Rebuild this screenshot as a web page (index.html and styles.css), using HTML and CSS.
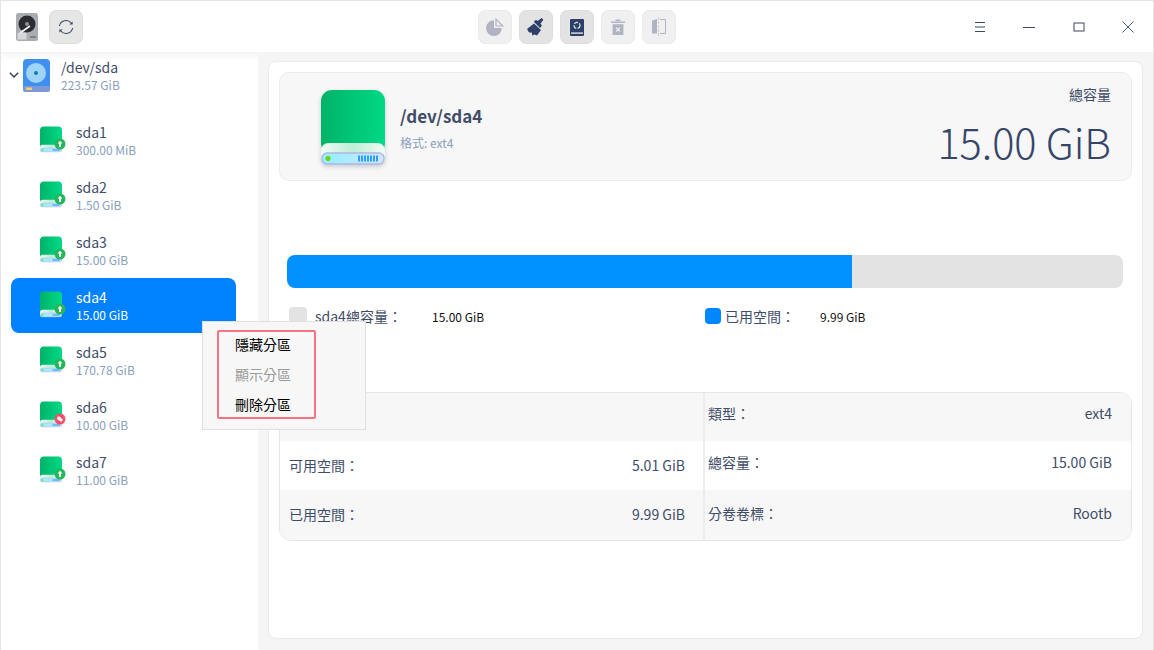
FILE: index.html
```html
<!DOCTYPE html>
<html lang="zh-Hant">
<head>
    <meta charset="UTF-8">
    <meta name="viewport" content="width=device-width, initial-scale=1.0">
    <title>磁碟管理器</title>
    <link rel="stylesheet" href="styles.css">
</head>
<body>
    <svg class="defs" width="0" height="0">
        <defs>
            <linearGradient id="green" x1="0" x2="1" y1="0" y2="0">
                <stop offset="0" stop-color="#00b368"/>
                <stop offset="1" stop-color="#00d985"/>
            </linearGradient>
            <linearGradient id="band" x1="0" x2="1" y1="0" y2="0">
                <stop offset="0" stop-color="#f2fbf6"/>
                <stop offset=".5" stop-color="#bdeed6"/>
                <stop offset="1" stop-color="#f2fbf6"/>
            </linearGradient>
            <linearGradient id="front" x1="0" x2="1" y1="0" y2="0">
                <stop offset="0" stop-color="#8ff0ff"/>
                <stop offset="1" stop-color="#d4e4ff"/>
            </linearGradient>
            <symbol id="drive" viewBox="0 0 64 76">
                <rect x="0" y="0" width="64" height="64" rx="11" fill="url(#green)"/>
                <path d="M0 62 Q0 53 8 53 H56 Q64 53 64 62 V70 H0 Z" fill="url(#band)"/>
                <rect x="1" y="63" width="62" height="11" rx="5" fill="url(#front)" stroke="#b0b8de" stroke-width="1.5"/>
                <circle cx="7" cy="68.5" r="2.5" fill="#6fd300"/>
                <path d="M38 65.5v6M41 65.5v6M44 65.5v6M47 65.5v6M50 65.5v6M53 65.5v6M56 65.5v6" stroke="#0a8cff" stroke-width="1.6"/>
            </symbol>
            <symbol id="badge-up" viewBox="0 0 12 12">
                <circle cx="6" cy="6" r="5.5" fill="#22b85a"/>
                <path d="M6 2.8 8.4 5.6H7V9H5V5.6H3.6Z" fill="#fff"/>
            </symbol>
            <symbol id="badge-off" viewBox="0 0 12 12">
                <circle cx="6" cy="6" r="5.5" fill="#f4506a"/>
                <path d="M3 4.5 5 3.2 9 6.8 7.6 8.8 3.4 6.6Z" fill="#fff"/>
            </symbol>
        </defs>
    </svg>

    <div class="window">
        <header class="titlebar">
            <div class="titlebar-left">
                <svg class="app-icon" viewBox="0 0 22 28" width="22" height="28">
                    <rect x="0" y="0" width="22" height="28" rx="2.5" fill="#a9adb2"/>
                    <circle cx="11" cy="11" r="8.5" fill="#2a2c31"/>
                    <circle cx="11" cy="11" r="2" fill="#8d9096"/>
                    <rect x="1.5" y="20" width="9" height="6.5" fill="#d5d7da"/>
                    <path d="M4 20 14 13" stroke="#f4f4f4" stroke-width="1.6"/>
                    <path d="M14 24h6" stroke="#7e8186" stroke-width="2"/>
                </svg>
                <button class="tool-btn">
                    <svg viewBox="0 0 18 18" width="18" height="18" fill="none" stroke="#3b4766" stroke-width="1.1">
                        <path d="M2.4 8A6.7 6.7 0 0 1 14.2 5"/>
                        <path d="M15.6 10A6.7 6.7 0 0 1 3.8 13"/>
                        <path d="M15.6 3.4V6.6H12.4Z" fill="#3b4766" stroke="none"/>
                        <path d="M2.4 14.6V11.4H5.6Z" fill="#3b4766" stroke="none"/>
                    </svg>
                </button>
            </div>
            <div class="toolbar">
                <button class="tool-btn tool-btn-light">
                    <svg viewBox="0 0 18 18" width="18" height="18">
                        <path d="M8 2.2V10H15.8A7.9 7.9 0 1 1 8 2.2Z" fill="#b0b4c2"/>
                        <path d="M10 1.2 16.8 8H10Z" fill="none" stroke="#b0b4c2" stroke-width="1.2"/>
                    </svg>
                </button>
                <button class="tool-btn tool-btn-on">
                    <svg viewBox="0 0 20 20" width="20" height="20" fill="#2f4068">
                        <path d="M1 12 8 6.4 15 13 11 18.6 8.6 17.4 6.4 18.4 5.6 15.6 3 15.6Z"/>
                        <path d="M7.8 4.8 10 2.8 11.6 4 15.6 1 17.4 2.8 14.4 6.8 16 8.4 14 11Z"/>
                    </svg>
                </button>
                <button class="tool-btn tool-btn-on">
                    <svg viewBox="0 0 14 17" width="14" height="17">
                        <rect width="14" height="17" rx="1" fill="#2f4068"/>
                        <path d="M1 13.4H13V14.8H1Z" fill="#e4e5e8"/>
                        <circle cx="7" cy="6.4" r="3" fill="none" stroke="#e4e5e8" stroke-width="1.2" stroke-dasharray="4 1.4"/>
                    </svg>
                </button>
                <button class="tool-btn tool-btn-light">
                    <svg viewBox="0 0 16 18" width="16" height="18">
                        <path d="M5.5 1.5H10.5V3H5.5ZM1 3.4H15V5H1ZM2.6 6.2H13.4V17H2.6Z" fill="#b0b4c2"/>
                        <path d="M6 9.5 10 13.5M10 9.5 6 13.5" stroke="#eceded" stroke-width="1.1"/>
                    </svg>
                </button>
                <button class="tool-btn tool-btn-light">
                    <svg viewBox="0 0 16 20" width="16" height="20">
                        <path d="M1 3.5 6 2V16.5H1Z" fill="#b0b4c2"/>
                        <path d="M9 2.5H14.5V16.5H9" fill="none" stroke="#b0b4c2" stroke-width="1"/>
                        <path d="M7.5 0V20" stroke="#c9ccd4" stroke-width="1" stroke-dasharray="3 1"/>
                    </svg>
                </button>
            </div>
            <div class="window-btns">
                <button class="win-btn">
                    <svg viewBox="0 0 12 12" width="12" height="12"><path d="M1 1.5H11M1 6H11M1 10.5H11" stroke="#3b4766"/></svg>
                </button>
                <button class="win-btn">
                    <svg viewBox="0 0 12 12" width="12" height="12"><path d="M0 6.5H12" stroke="#3b4766"/></svg>
                </button>
                <button class="win-btn">
                    <svg viewBox="0 0 12 12" width="12" height="12"><rect x="1" y="2" width="10" height="8" fill="none" stroke="#3b4766"/></svg>
                </button>
                <button class="win-btn">
                    <svg viewBox="0 0 12 12" width="12" height="12"><path d="M.5.5 11.5 11.5M11.5.5 .5 11.5" stroke="#3b4766" stroke-width=".9"/></svg>
                </button>
            </div>
        </header>

        <div class="content">
            <aside class="sidebar">
                <div class="device">
                    <svg class="chevron" viewBox="0 0 10 6" width="10" height="6"><path d="M.8.8 5 5 9.2.8" fill="none" stroke="#2f3c58" stroke-width="1.4"/></svg>
                    <svg class="device-icon" viewBox="0 0 27 33" width="27" height="33">
                        <rect width="27" height="33" rx="4" fill="#3f8ff0"/>
                        <rect y="27" width="27" height="6" rx="2" fill="#7d99d8"/>
                        <circle cx="13" cy="14" r="10" fill="#9ed5f7"/>
                        <circle cx="13" cy="14" r="2" fill="#0f7fb0"/>
                        <rect x="3" y="28.5" width="6" height="2.5" fill="#f0d070"/>
                    </svg>
                    <div class="part-text device-text">
                        <span class="part-name">/dev/sda</span>
                        <span class="part-size">223.57 GiB</span>
                    </div>
                </div>
                <ul class="part-list">
                    <li class="part">
                        <span class="part-icon"><svg class="drive-sm"><use href="#drive"/></svg><svg class="badge"><use href="#badge-up"/></svg></span>
                        <div class="part-text"><span class="part-name">sda1</span><span class="part-size">300.00 MiB</span></div>
                    </li>
                    <li class="part">
                        <span class="part-icon"><svg class="drive-sm"><use href="#drive"/></svg><svg class="badge"><use href="#badge-up"/></svg></span>
                        <div class="part-text"><span class="part-name">sda2</span><span class="part-size">1.50 GiB</span></div>
                    </li>
                    <li class="part">
                        <span class="part-icon"><svg class="drive-sm"><use href="#drive"/></svg><svg class="badge"><use href="#badge-up"/></svg></span>
                        <div class="part-text"><span class="part-name">sda3</span><span class="part-size">15.00 GiB</span></div>
                    </li>
                    <li class="part part-selected">
                        <span class="part-icon"><svg class="drive-sm"><use href="#drive"/></svg><svg class="badge"><use href="#badge-up"/></svg></span>
                        <div class="part-text"><span class="part-name">sda4</span><span class="part-size">15.00 GiB</span></div>
                    </li>
                    <li class="part">
                        <span class="part-icon"><svg class="drive-sm"><use href="#drive"/></svg><svg class="badge"><use href="#badge-up"/></svg></span>
                        <div class="part-text"><span class="part-name">sda5</span><span class="part-size">170.78 GiB</span></div>
                    </li>
                    <li class="part">
                        <span class="part-icon"><svg class="drive-sm"><use href="#drive"/></svg><svg class="badge"><use href="#badge-off"/></svg></span>
                        <div class="part-text"><span class="part-name">sda6</span><span class="part-size">10.00 GiB</span></div>
                    </li>
                    <li class="part">
                        <span class="part-icon"><svg class="drive-sm"><use href="#drive"/></svg><svg class="badge"><use href="#badge-up"/></svg></span>
                        <div class="part-text"><span class="part-name">sda7</span><span class="part-size">11.00 GiB</span></div>
                    </li>
                </ul>
            </aside>

            <main class="panel">
                <section class="info-card">
                    <svg class="drive-lg"><use href="#drive"/></svg>
                    <div class="info-title">
                        <h1>/dev/sda4</h1>
                        <p>格式: ext4</p>
                    </div>
                    <div class="info-total">
                        <span class="total-label">總容量</span>
                        <span class="total-value">15.00 GiB</span>
                    </div>
                </section>

                <div class="usage-bar"><div class="usage-fill" style="width: 67.6%"></div></div>

                <div class="legend">
                    <div class="legend-item legend-total">
                        <span class="swatch swatch-grey"></span>
                        <span class="legend-label">sda4總容量：</span>
                        <span class="legend-value">15.00 GiB</span>
                    </div>
                    <div class="legend-item">
                        <span class="swatch swatch-blue"></span>
                        <span class="legend-label">已用空間：</span>
                        <span class="legend-value">9.99 GiB</span>
                    </div>
                </div>

                <div class="details">
                    <div class="row row-grey"><span></span><span></span></div>
                    <div class="row row-grey"><span>類型：</span><span>ext4</span></div>
                    <div class="row"><span>可用空間：</span><span>5.01 GiB</span></div>
                    <div class="row"><span>總容量：</span><span>15.00 GiB</span></div>
                    <div class="row row-grey"><span>已用空間：</span><span>9.99 GiB</span></div>
                    <div class="row row-grey"><span>分卷卷標：</span><span>Rootb</span></div>
                </div>
            </main>
        </div>

        <div class="context-menu">
            <ul class="menu-box">
                <li>隱藏分區</li>
                <li class="menu-disabled">顯示分區</li>
                <li>刪除分區</li>
            </ul>
        </div>
    </div>
</body>
</html>
```

FILE: styles.css
```css
* {
    box-sizing: border-box;
}
html, body {
    margin: 0;
    padding: 0;
}
body {
    font-family: "Noto Sans CJK TC", "Noto Sans", sans-serif;
    color: #414d68;
    background: #fff;
}
.defs {
    position: absolute;
}
.window {
    position: relative;
    width: 1154px;
    height: 650px;
    overflow: hidden;
    display: flex;
    flex-direction: column;
    border: 1px solid #e4e4e4;
    border-bottom: none;
}
button {
    padding: 0;
    border: none;
    background: none;
}

/* titlebar */
.titlebar {
    height: 51px;
    flex: none;
    display: flex;
    align-items: center;
    justify-content: space-between;
    position: relative;
    background: #fff;
}
.titlebar-left {
    display: flex;
    align-items: center;
    gap: 11px;
    padding-left: 15px;
}
.toolbar {
    position: absolute;
    left: 477px;
    top: 9px;
    display: flex;
    gap: 7px;
}
.tool-btn {
    width: 34px;
    height: 34px;
    display: flex;
    align-items: center;
    justify-content: center;
    border-radius: 8px;
    background: #e6e6e6;
    box-shadow: inset 0 0 0 1px #dedede;
}
.tool-btn-light {
    background: #f0f0f0;
    box-shadow: inset 0 0 0 1px #ebebeb;
}
.tool-btn-on {
    background: #e3e3e3;
}
.window-btns {
    display: flex;
}
.win-btn {
    width: 49.5px;
    height: 50px;
    display: flex;
    align-items: center;
    justify-content: center;
}

/* layout */
.content {
    flex: 1;
    display: flex;
    background: #f5f5f5;
}
.sidebar {
    width: 257px;
    flex: none;
    background: linear-gradient(#f5f5f5, #fff 9px);
}
.device {
    height: 61px;
    padding: 7px 0 0 8px;
    display: flex;
    align-items: flex-start;
}
.chevron {
    margin: 13px 4px 0 0;
}
.device-icon {
    margin-right: 11px;
}
.device-text {
    margin-top: -1px;
}
.part-text {
    display: flex;
    flex-direction: column;
}
.part-name {
    font-size: 14px;
    line-height: 18px;
    color: #414d68;
}
.part-size {
    font-size: 12px;
    line-height: 17px;
    color: #8aa0bc;
}
.part-list {
    list-style: none;
    margin: 0;
    padding: 0 22px 0 10px;
}
.part {
    height: 55px;
    display: flex;
    align-items: center;
    padding: 0 0 0 29px;
    border-radius: 8px;
}
.part-selected {
    background: #0081ff;
}
.part-selected .part-name,
.part-selected .part-size {
    color: #fff;
}
.part-icon {
    position: relative;
    width: 22px;
    height: 27px;
    margin: -2px 14px 0 0;
}
.drive-sm {
    display: block;
    width: 22px;
    height: 27px;
}
.badge {
    position: absolute;
    right: -4px;
    bottom: 3px;
    width: 12px;
    height: 12px;
}

/* main panel */
.panel {
    width: 875px;
    height: 578px;
    margin: 9px 0 0 10px;
    padding: 10px 10px 0;
    background: #fff;
    border: 1px solid #eaeaea;
    border-radius: 8px;
}
.info-card {
    height: 109px;
    display: flex;
    align-items: center;
    padding: 0 20px 0 41px;
    background: #f7f7f7;
    border: 1px solid #ececec;
    border-radius: 10px;
}
.drive-lg {
    width: 64px;
    height: 76px;
    flex: none;
    margin: 2px 15px 0 0;
    filter: drop-shadow(0 2px 2px rgba(60, 70, 110, 0.25));
}
.info-title {
    flex: 1;
    padding-top: 1px;
}
.info-title h1 {
    margin: 0;
    font-size: 17px;
    line-height: 26px;
    font-weight: 700;
    color: #414d68;
}
.info-title p {
    margin: 5px 0 0;
    font-size: 12px;
    line-height: 18px;
    color: #8aa0bc;
}
.info-total {
    display: flex;
    flex-direction: column;
    align-items: flex-end;
}
.total-label {
    font-size: 14px;
    line-height: 20px;
}
.total-value {
    margin-top: 8px;
    font-size: 41.5px;
    line-height: 58px;
    font-weight: 300;
    color: #36456a;
}

.usage-bar {
    height: 33px;
    margin: 74px 9px 0 8px;
    background: #e3e3e3;
    border-radius: 8px;
    overflow: hidden;
}
.usage-fill {
    height: 100%;
    background: #0091ff;
}
.legend {
    display: flex;
    margin: 18px 0 0 10px;
}
.legend-item {
    display: flex;
    align-items: center;
    height: 20px;
}
.legend-total {
    width: 416px;
}
.swatch {
    flex: none;
    width: 18px;
    height: 18px;
    border-radius: 4px;
    margin-right: 8px;
}
.swatch-grey {
    background: #e3e3e3;
}
.swatch-blue {
    width: 16px;
    height: 16px;
    margin-right: 4px;
    background: #0086ff;
}
.legend-label {
    font-size: 14px;
    width: 117px;
}
.legend-item:last-child .legend-label {
    width: 95px;
}
.legend-value {
    font-size: 12px;
    color: #111;
}

.details {
    display: grid;
    grid-template-columns: 423px 1fr;
    grid-template-rows: 48px 49px 50px;
    margin-top: 66px;
    border: 1px solid #e6e6e6;
    border-radius: 12px;
    overflow: hidden;
}
.row {
    display: flex;
    align-items: center;
    justify-content: space-between;
    padding: 0 18px 2px 9px;
    font-size: 14px;
}
.row:nth-child(even) {
    border-left: 2px solid #ececec;
    padding: 0 19px 8px 3px;
}
.row:last-child {
    padding-bottom: 4px;
}
.row-grey {
    background: #f7f7f7;
}

/* context menu */
.context-menu {
    position: absolute;
    left: 201px;
    top: 320px;
    width: 164px;
    height: 109px;
    padding: 8px 0 0 14px;
    background: #f7f7f7;
    border: 1px solid #e0e0e0;
}
.menu-box {
    list-style: none;
    margin: 0;
    padding: 0 0 0 16px;
    width: 99px;
    height: 89px;
    border: 2px solid #f4757e;
    border-radius: 2px;
}
.menu-box li {
    height: 30px;
    line-height: 24px;
    font-size: 14px;
    color: #000;
}
.menu-box .menu-disabled {
    color: #9a9a9a;
}
```
